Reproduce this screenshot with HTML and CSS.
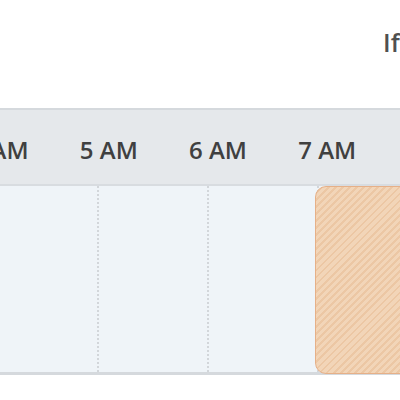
FILE: index.html
```html
<!DOCTYPE html>
<html>
<head>
<meta charset="utf-8">
<link rel="stylesheet" href="styles.css">
</head>
<body>
<div class="page">
  <div class="top">
    <div class="caption">If the schedule changes</div>
  </div>
  <div class="timeline">
    <div class="hours">
      <div class="hour">4 AM</div>
      <div class="hour">5 AM</div>
      <div class="hour">6 AM</div>
      <div class="hour">7 AM</div>
      <div class="hour">8 AM</div>
    </div>
    <div class="lanes">
      <div class="cols">
        <div class="col"></div>
        <div class="col"></div>
        <div class="col"></div>
        <div class="col"></div>
      </div>
      <div class="event"></div>
    </div>
  </div>
</div>
</body>
</html>
```
FILE: styles.css
```css
html, body {
  margin: 0;
  padding: 0;
  background: #ffffff;
}
.page {
  width: 400px;
  height: 400px;
  overflow: hidden;
  font-family: "Open Sans", "Liberation Sans", sans-serif;
}
.top {
  height: 108px;
  position: relative;
}
.caption {
  padding-left: 383px;
  padding-top: 25px;
  white-space: nowrap;
  font-size: 25px;
  font-weight: 600;
  line-height: 34px;
  color: #505050;
}
.timeline {
  border-top: 2px solid #d5d9dd;
  border-bottom: 3px solid #d5d9dd;
}
.hours {
  height: 68px;
  padding-top: 6px;
  background: #e5e8eb;
  border-bottom: 2px solid #d8dce0;
  display: flex;
  align-items: center;
  margin-left: -55px;
  white-space: nowrap;
}
.hour {
  flex: 0 0 109.2px;
  text-align: center;
  font-size: 24px;
  font-weight: 600;
  color: #404040;
  line-height: 30px;
}
.lanes {
  position: relative;
  height: 186px;
  background: #eff4f8;
}
.cols {
  display: flex;
  height: 100%;
  margin-left: -11px;
}
.col {
  flex: 0 0 108px;
  border-right: 2px dotted #d2d6da;
}
.event {
  position: absolute;
  left: 315px;
  top: 0;
  width: 120px;
  bottom: -2px;
  border-radius: 11px;
  border: 1px solid #e6b088;
  box-sizing: border-box;
  background: repeating-linear-gradient(135deg, #f2d5b8 0 3px, #ecc7a4 3px 5px);
}
```
